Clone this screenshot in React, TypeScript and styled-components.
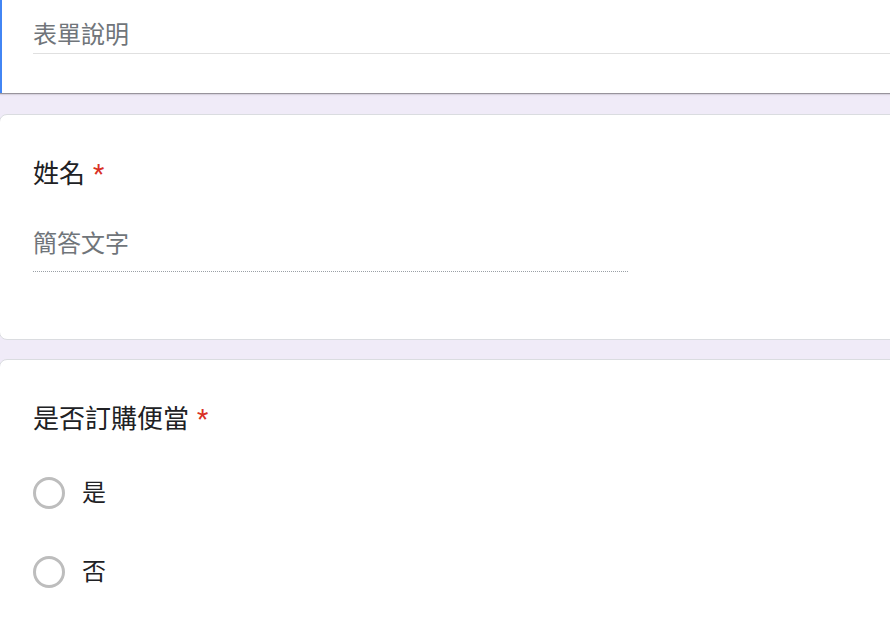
import styled, { createGlobalStyle } from 'styled-components';

const GlobalStyle = createGlobalStyle`
  html, body {
    margin: 0;
    padding: 0;
    background: #f0ebf8;
    overflow: hidden;
  }
  body {
    font-family: Roboto, "Noto Sans CJK TC", "Noto Sans", sans-serif;
    color: #202124;
  }
`;

const options = ['是', '否'];

function App() {
  return (
    <>
      <GlobalStyle />
      <Form>
        <HeaderCard>
          <Description>表單說明</Description>
        </HeaderCard>

        <Question>
          <Title>
            姓名<Required>*</Required>
          </Title>
          <ShortAnswer>簡答文字</ShortAnswer>
        </Question>

        <Question className="last">
          <Title>
            是否訂購便當<Required>*</Required>
          </Title>
          <Options>
            {options.map((label) => (
              <Option key={label}>
                <Radio />
                <OptionLabel>{label}</OptionLabel>
              </Option>
            ))}
          </Options>
        </Question>
      </Form>
    </>
  );
}

const Form = styled.div`
  display: flex;
  flex-direction: column;
  gap: 19px;
  width: 1000px;
  margin-left: -1px;
`;

const HeaderCard = styled.div`
  background: #fff;
  border-left: 3px solid #4285f4;
  padding: 17px 0 39px 31px;
  margin-bottom: 2px;
  box-shadow: 0 2px 1px -1px rgba(0, 0, 0, 0.2), 0 1px 1px 0 rgba(0, 0, 0, 0.14),
    0 1px 3px 0 rgba(0, 0, 0, 0.12);
`;

const Description = styled.div`
  font-size: 24px;
  line-height: 36px;
  color: #70757a;
  padding-bottom: 0;
  border-bottom: 1px solid #e0e0e0;
`;

const Question = styled.div`
  background: #fff;
  border: 1px solid #dadce0;
  border-radius: 8px;
  padding: 41px 0 67px 33px;

  &.last {
    padding-bottom: 80px;
  }
`;

const Title = styled.div`
  font-size: 26px;
  line-height: 36px;
  color: #202124;
`;

const Required = styled.span`
  color: #d93025;
  font-size: 26px;
  padding-left: 8px;
`;

const ShortAnswer = styled.div`
  width: 595px;
  margin-top: 34px;
  font-size: 24px;
  line-height: 36px;
  color: #70757a;
  padding-bottom: 9px;
  border-bottom: 1px dotted #9aa0a6;
`;

const Options = styled.div`
  display: flex;
  flex-direction: column;
  gap: 31px;
  margin-top: 32px;
`;

const Option = styled.label`
  display: flex;
  align-items: center;
  height: 48px;
`;

const Radio = styled.span`
  box-sizing: border-box;
  width: 32px;
  height: 32px;
  border: 3px solid #bdbdbd;
  border-radius: 50%;
  flex-shrink: 0;
`;

const OptionLabel = styled.span`
  margin-left: 17px;
  font-size: 24px;
  line-height: 36px;
  color: #202124;
`;

export default App;
